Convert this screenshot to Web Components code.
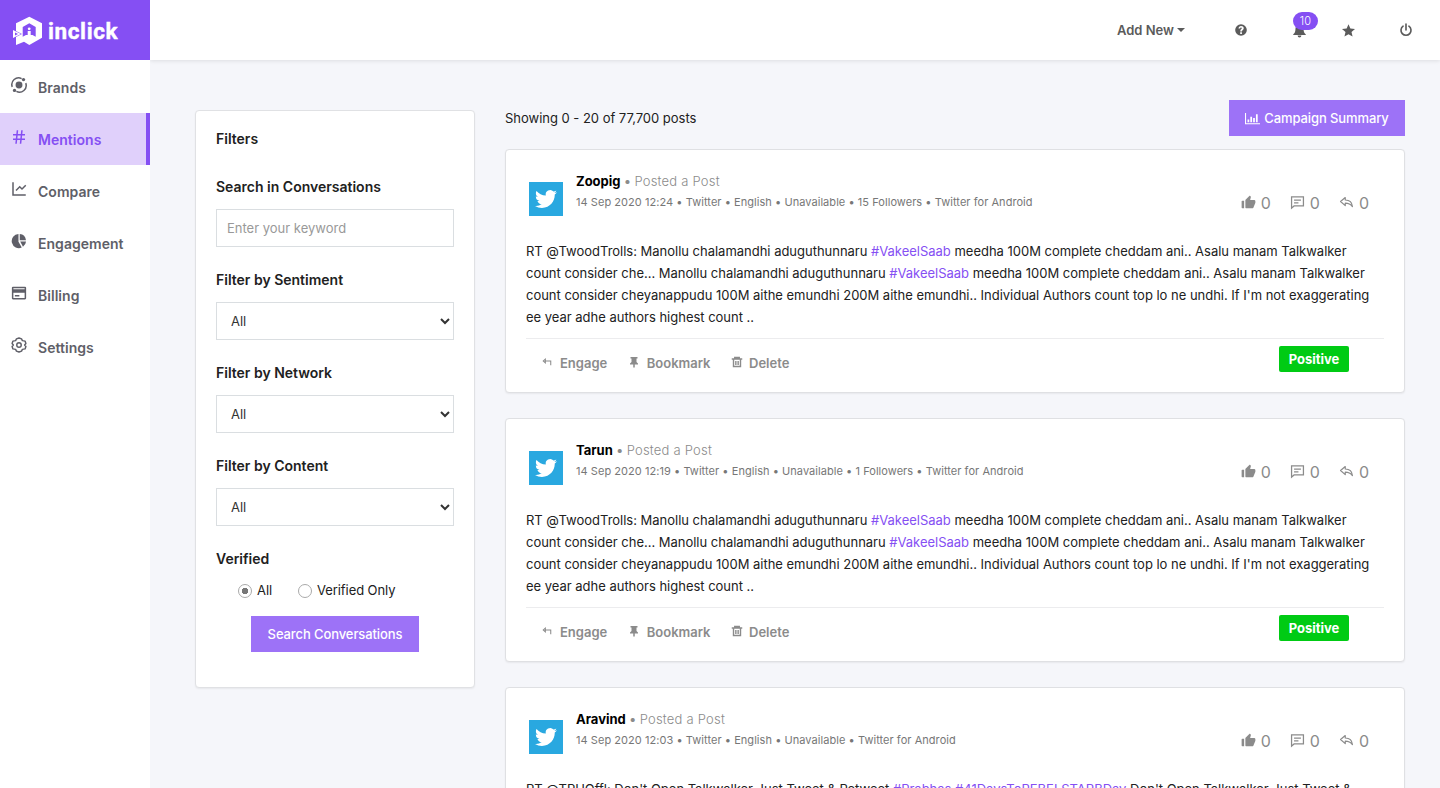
<!DOCTYPE html>
<html lang="en">
<head>
<meta charset="utf-8">
<title>inclick</title>
<style>
  html, body { height: 100%; }
  body {
    margin: 0;
    overflow: hidden;
    background: #f5f6fa;
    color: #212121;
    font-family: Inter, "Liberation Sans", sans-serif;
    font-size: 13px;
    --brand: #854ff3;
    --brand-soft: #9d72f7;
    --line: #dee2e6;
    --muted: #8b8b8b;
  }
</style>
</head>
<body>
<app-shell></app-shell>

<script>
(() => {
  'use strict';

  // ---------- Icons ----------
  const ICONS = {
    brands: '<circle cx="12" cy="12" r="4.600"/><path d="M3 14.500A9 9 0 0 1 15.500 3.400M21 9.500A9 9 0 0 1 8.500 20.600" fill="none" stroke="currentColor" stroke-width="2"/><circle cx="18" cy="4.800" r="2.200"/><circle cx="6" cy="19.200" r="2.200"/>',
    hash: '<path d="M7.784 14l.42-4H4V8h4.415l.525-5h2.011l-.525 5h3.989l.525-5h2.011l-.525 5H20v2h-3.784l-.42 4H20v2h-4.415l-.525 5h-2.011l.525-5H9.585l-.525 5H7.049l.525-5H4v-2h3.784zm2.011 0h3.990l.42-4h-3.990l-.42 4z"/>',
    line: '<path d="M5 3v16h16v2H3V3h2zm15.293 3.293l1.414 1.414L16 13.414l-3-2.999-4.293 4.292-1.414-1.414L13 7.586l3 2.999 4.293-4.292z"/>',
    pie: '<path d="M11.300 2.700V13l4.400 7.600A9.400 9.400 0 1 1 11.300 2.700zM13 2.700A9.400 9.400 0 0 1 21.300 11H13zM13.600 12.700h7.800a9.400 9.400 0 0 1-4.100 7z"/>',
    card: '<path d="M4 3.500h16a1.500 1.500 0 0 1 1.500 1.500v14a1.500 1.500 0 0 1-1.500 1.500H4A1.500 1.500 0 0 1 2.500 19V5A1.500 1.500 0 0 1 4 3.500zm15.500 8h-15v7h15v-7zm0-4.500V5.500h-15V7h15zM6.500 14.500h6v2h-6z"/>',
    gear: '<path d="M12 2.700l3.400 1.200 1.100 2.300 3.600.6 1.100 3.200L19.500 12l1.700 2-1.100 3.200-3.600.6-1.100 2.300L12 21.300l-3.400-1.200-1.100-2.300-3.600-.6L2.800 14l1.700-2-1.700-2 1.100-3.200 3.600-.6 1.100-2.300z" fill="none" stroke="currentColor" stroke-width="1.900" stroke-linejoin="round"/><circle cx="12" cy="12" r="3" fill="none" stroke="currentColor" stroke-width="1.900"/>',
    help: '<path fill-rule="evenodd" d="M12 2a10 10 0 1 0 0 20 10 10 0 0 0 0-20zM10.600 16h3v3h-3zM7.700 9.500C7.900 6.600 9.600 5 12.100 5c2.600 0 4.600 1.500 4.600 3.900 0 2.900-3 3.200-3 5.100v.6h-3V14c0-3.100 2.700-3.300 2.700-4.900 0-.8-.6-1.300-1.400-1.300-.9 0-1.400.6-1.500 1.700z"/>',
    bell: '<path d="M12 2a1.500 1.500 0 0 1 1.500 1.700C17 4.400 18.500 7 18.500 10c0 4.500 1.500 6.500 3.500 8v1H2v-1c2-1.500 3.500-3.500 3.500-8 0-3 1.500-5.600 5-6.300A1.500 1.500 0 0 1 12 2zM9 20h6a3 3 0 0 1-6 0z"/>',
    star: '<path d="M12 2l3 6.800 7.400.7-5.600 4.900 1.700 7.200L12 17.800l-6.500 3.800 1.700-7.200-5.600-4.900L9 8.800z"/>',
    power: '<path d="M7 5.500a8.600 8.600 0 1 0 10 0M12 2v10" fill="none" stroke="currentColor" stroke-width="2.800" stroke-linecap="round"/>',
    bars: '<path d="M0 3h1.700v16.500H24V21H0zM4 13.500h2.800V18H4zM8.500 9h2.800v9H8.500zM13 11h2.800v7H13zM17.500 5h2.800v13h-2.800z"/>',
    like: '<path d="M2 9h3v12H2a1 1 0 0 1-1-1V10a1 1 0 0 1 1-1zm5.293-1.293l6.400-6.400a.5.5 0 0 1 .654-.047l.853.640a1.500 1.500 0 0 1 .553 1.570L14.600 8H21a2 2 0 0 1 2 2v2.104a2 2 0 0 1-.150.762l-3.095 7.515a1 1 0 0 1-.925.619H8a1 1 0 0 1-1-1V8.414a1 1 0 0 1 .293-.707z"/>',
    chat: '<path d="M2.500 3h19v14.500H6.500L2.500 21zM6.500 8h11M6.500 12.500h7" fill="none" stroke="currentColor" stroke-width="2"/>',
    reply: '<path d="M10 4L2.500 10.500 10 17v-4c5 0 8.500 1.500 11.500 5.500C21 12 17 8 10 8z" fill="none" stroke="currentColor" stroke-width="1.900" stroke-linejoin="round"/>',
    engage: '<path d="M8 5L3 9.500 8 14zM7 9.500h14V20" fill="none" stroke="currentColor" stroke-width="2.500"/>',
    pin: '<path d="M5 2h14v3h-2v7l3 3v2h-6.500v5l-1.500 2-1.500-2v-5H4v-2l3-3V5H5z"/>',
    trash: '<path d="M7.500 6V3h9v3M1.500 6h21M5 6v15h14V6M9.700 10v8M14.300 10v8" fill="none" stroke="currentColor" stroke-width="2.800"/>',
    bird: '<path d="M23.953 4.570a10 10 0 0 1-2.825.775 4.958 4.958 0 0 0 2.163-2.723c-.951.555-2.005.959-3.127 1.184a4.920 4.920 0 0 0-8.384 4.482C7.690 8.095 4.067 6.130 1.640 3.162a4.822 4.822 0 0 0-.666 2.475c0 1.710.870 3.213 2.188 4.096a4.904 4.904 0 0 1-2.228-.616v.060a4.923 4.923 0 0 0 3.946 4.827 4.996 4.996 0 0 1-2.212.085 4.936 4.936 0 0 0 4.604 3.417 9.867 9.867 0 0 1-6.102 2.105c-.390 0-.779-.023-1.170-.067a13.995 13.995 0 0 0 7.557 2.209c9.053 0 13.998-7.496 13.998-13.985 0-.210 0-.420-.015-.630A9.935 9.935 0 0 0 24 4.590z"/>'
  };

  class UiIcon extends HTMLElement {
    constructor() {
      super();
      this.attachShadow({ mode: 'open' });
    }
    connectedCallback() {
      const size = this.getAttribute('size') || 16;
      this.shadowRoot.innerHTML = `
        <style>
          :host{ display:inline-block; flex:none; width:${size}px; height:${size}px }
          svg{ display:block; width:100%; height:100%; fill:currentColor }
        </style>
        <svg viewBox="0 0 24 24" aria-hidden="true">${ICONS[this.getAttribute('name')] || ''}</svg>
      `;
    }
  }

  // Small helper: element with a fixed shadow template
  const define = (tag, render) => customElements.define(tag, class extends HTMLElement {
    constructor() {
      super();
      this.attachShadow({ mode: 'open' });
    }
    connectedCallback() { this.shadowRoot.innerHTML = render(this); }
  });

  customElements.define('ui-icon', UiIcon);

  // ---------- Sidebar ----------
  define('brand-logo', () => `
    <style>
      :host{
        display:flex; align-items:center; gap:5px; height:60px;
        padding:2px 0 0 12px; box-sizing:border-box;
        background:var(--brand); color:#fff;
      }
      svg{ width:31px; height:30px; flex:none }
      span{ font:700 22.500px/28px Roboto, sans-serif; letter-spacing:.6px; -webkit-text-stroke:.4px #fff }
    </style>
    <svg viewBox="0 0 31 30">
      <path fill="#fff" fill-rule="evenodd" d="M17.300.7L30 7.300v14.400L17.300 29 12 25.700 4 29V7.300zM17.300 7.300L10.700 11v9.700l3.300-1.700h6.500l3.200 1.700V11z"/>
      <path d="M-1 12.500L10 18-1 23.500z" fill="#854ff3"/>
      <path fill="#fff" fill-rule="evenodd" d="M1 14l8 4-8 4zM3 16.500v3l3-1.500z"/>
      <circle cx="17.200" cy="12.800" r="1.400" fill="#fff"/>
      <path d="M15.700 15h3v6h-3z" fill="#fff"/>
    </svg>
    <span>inclick</span>
  `);

  define('nav-item', el => `
    <style>
      :host{
        display:flex; align-items:center; height:52px; padding-left:10px;
        box-sizing:border-box; color:#5f5f68;
        font-size:14px; font-weight:600; letter-spacing:.03px;
        border-right:4px solid transparent;
      }
      :host([active]){ color:var(--brand); background:#e0d0fb; border-color:var(--brand) }
      ui-icon{ margin:-4px 10px 0 0 }
    </style>
    <ui-icon name="${el.getAttribute('icon')}" size="18"></ui-icon><slot></slot>
  `);

  define('side-bar', () => `
    <style>
      :host{ display:block; width:150px; background:#fff }
      nav{ padding-top:1px }
    </style>
    <brand-logo></brand-logo>
    <nav>
      <nav-item icon="brands">Brands</nav-item>
      <nav-item icon="hash" active>Mentions</nav-item>
      <nav-item icon="line">Compare</nav-item>
      <nav-item icon="pie">Engagement</nav-item>
      <nav-item icon="card">Billing</nav-item>
      <nav-item icon="gear">Settings</nav-item>
    </nav>
  `);

  // ---------- Top bar ----------
  define('top-bar', () => `
    <style>
      :host{
        display:flex; align-items:center; justify-content:flex-end;
        height:60px; padding-right:27px; box-sizing:border-box;
        background:#fff; color:#5b5b5b; box-shadow:0 1px 4px rgba(0,0,0,.1);
      }
      .add{ display:flex; align-items:center; gap:3px; font-weight:600; margin-right:49px }
      .add i{ border:4px solid transparent; border-top-color:currentColor; border-bottom:0 }
      .bell{ position:relative; display:flex; margin:0 34px 0 44px }
      .badge{
        position:absolute; left:1px; top:-11px; width:25px; height:18px; border-radius:9px;
        background:var(--brand); color:#fff; font-size:11px; font-weight:300;
        line-height:18px; text-align:center; letter-spacing:.3px;
      }
      .power{ margin-left:43px }
    </style>
    <div class="add">Add New<i></i></div>
    <ui-icon name="help" size="14"></ui-icon>
    <div class="bell"><ui-icon name="bell" size="15"></ui-icon><span class="badge">10</span></div>
    <ui-icon name="star" size="15"></ui-icon>
    <ui-icon class="power" name="power" size="14"></ui-icon>
  `);

  // ---------- Filters ----------
  define('filter-field', el => `
    <style>
      :host{ display:block; height:93px }
      label{ display:block; font-size:14px; font-weight:600; line-height:20px; margin-bottom:12px }
    </style>
    <label>${el.getAttribute('label')}</label><slot></slot>
  `);

  define('filter-panel', () => `
    <style>
      :host{
        display:block; width:280px; height:578px; box-sizing:border-box;
        padding:18px 20px; background:#fff; border:1px solid #e0e1e4; border-radius:4px;
        box-shadow:0 1px 2px rgba(0,0,0,.06);
      }
      h2{ margin:0 0 28px; font-size:14px; font-weight:600; line-height:20px }
      input[type=text], select{
        display:block; width:100%; height:38px; box-sizing:border-box;
        border:1px solid #dadee1; border-radius:0; background:#fff; outline:0;
        font:13px Inter, sans-serif; color:#333; padding:0 10px;
      }
      input::placeholder{ color:#999 }
      select{ padding:0 0 0 10px }
      .verified{ height:67px }
      .radios{ display:flex; gap:26px; padding-left:22px; margin-top:-1px }
      .radios label{ display:flex; align-items:center; gap:5px; line-height:20px; font-size:13px; letter-spacing:-.08px }
      input[type=radio]{
        appearance:none; width:14px; height:14px; margin:1px 0 0; border:1px solid #aaa; border-radius:50%;
      }
      input[type=radio]:checked{ background:radial-gradient(circle, #777 0 3px, #fff 3.500px) }
      button{
        display:block; width:168px; height:36px; margin:0 auto; padding:0; border:0;
        background:var(--brand-soft); color:#fff; font:500 13px Inter, sans-serif; letter-spacing:-.1px;
      }
    </style>
    <h2>Filters</h2>
    <filter-field label="Search in Conversations"><input type="text" placeholder="Enter your keyword"></filter-field>
    <filter-field label="Filter by Sentiment"><select><option>All</option></select></filter-field>
    <filter-field label="Filter by Network"><select><option>All</option></select></filter-field>
    <filter-field label="Filter by Content"><select><option>All</option></select></filter-field>
    <filter-field class="verified" label="Verified">
      <div class="radios">
        <label><input type="radio" name="verified" checked>All</label>
        <label><input type="radio" name="verified">Verified Only</label>
      </div>
    </filter-field>
    <button>Search Conversations</button>
  `);

  // ---------- Posts ----------
  define('post-stat', el => `
    <style>
      :host{ display:flex; align-items:center; gap:5px; font-size:16px; line-height:20px; color:var(--muted) }
      ui-icon{ margin-top:-2px }
    </style>
    <ui-icon name="${el.getAttribute('icon')}" size="15"></ui-icon><slot></slot>
  `);

  define('post-action', el => `
    <style>
      :host{ display:flex; align-items:center; font-weight:600; line-height:20px; color:var(--muted) }
      ui-icon{ margin:-2px var(--icon-gap, 6px) 0 0 }
    </style>
    <ui-icon name="${el.getAttribute('icon')}" size="${el.getAttribute('size') || 12}"></ui-icon><slot></slot>
  `);

  define('post-card', el => `
    <style>
      :host{
        display:block; height:244px; box-sizing:border-box; padding:20px;
        background:#fff; border:1px solid #dfe0e3; border-radius:4px;
        box-shadow:0 1px 2px rgba(0,0,0,.06);
      }
      header{ display:flex; height:70px }
      .avatar{
        display:grid; place-items:center; width:34px; height:34px; margin:12px 13px 0 3px;
        background:#29a8e0; color:#fff;
      }
      .who{ flex:1; line-height:20px; padding-top:1px }
      .name{ color:var(--muted); font-weight:300; letter-spacing:.22px }
      .name b{ color:#000; font-weight:700; letter-spacing:0 }
      .name span{ font-weight:500; margin:0 -.5px }
      .meta{ color:#777; font-size:11px; line-height:23px; letter-spacing:.05px }
      .stats{ display:flex; gap:19px; padding:23px 15px 0 0; height:20px }
      .text{ height:98px; line-height:22px; letter-spacing:-.014px; white-space:nowrap; border-bottom:1px solid #ececee }
      footer{ display:flex; align-items:flex-start; padding-top:14px }
      .engage{ margin-left:16px; --icon-gap:8px }
      .bookmark{ margin-left:21px; --icon-gap:6.500px }
      .delete{ margin-left:20.500px }
      .badge{
        margin:-7px 35px 0 auto; width:70px; height:26px; border-radius:2px;
        background:#00cb14; color:#fff; font-weight:700; line-height:26px; text-align:center;
      }
    </style>
    <header>
      <div class="avatar"><ui-icon name="bird" size="22"></ui-icon></div>
      <div class="who">
        <div class="name"><b>${el.getAttribute('author')}</b> <span>•</span> Posted a Post</div>
        <div class="meta">${el.getAttribute('meta')}</div>
      </div>
      <div class="stats">
        <post-stat icon="like">0</post-stat>
        <post-stat icon="chat">0</post-stat>
        <post-stat icon="reply">0</post-stat>
      </div>
    </header>
    <div class="text"><slot></slot></div>
    <footer>
      <post-action class="engage" icon="engage" size="10">Engage</post-action>
      <post-action class="bookmark" icon="pin">Bookmark</post-action>
      <post-action class="delete" icon="trash">Delete</post-action>
      <span class="badge">Positive</span>
    </footer>
  `);

  define('hash-tag', () => `
    <style>:host{ color:var(--brand) }</style><slot></slot>
  `);

  const vakeel = `RT @TwoodTrolls: Manollu chalamandhi aduguthunnaru <hash-tag>#VakeelSaab</hash-tag> meedha 100M complete cheddam ani.. Asalu manam Talkwalker<br>
    count consider che... Manollu chalamandhi aduguthunnaru <hash-tag>#VakeelSaab</hash-tag> meedha 100M complete cheddam ani.. Asalu manam Talkwalker<br>
    count consider cheyanappudu 100M aithe emundhi 200M aithe emundhi.. Individual Authors count top lo ne undhi. If I'm not exaggerating<br>
    ee year adhe authors highest count ..`;

  const POSTS = [
    {
      author: 'Zoopig',
      meta: '14 Sep 2020 12:24 • Twitter • English • Unavailable • 15 Followers • Twitter for Android',
      text: vakeel
    },
    {
      author: 'Tarun',
      meta: '14 Sep 2020 12:19 • Twitter • English • Unavailable • 1 Followers • Twitter for Android',
      text: vakeel
    },
    {
      author: 'Aravind',
      meta: '14 Sep 2020 12:03 • Twitter • English • Unavailable • Twitter for Android',
      text: `RT @TPHOffl: Don't Open Talkwalker Just Tweet &amp; Retweet <hash-tag>#Prabhas</hash-tag> <hash-tag>#41DaysToREBELSTARBDay</hash-tag> Don't Open Talkwalker Just Tweet &amp;`
    }
  ];

  define('post-feed', () => `
    <style>
      :host{ display:block; width:900px }
      .bar{ display:flex; justify-content:space-between; height:49px }
      .count{ line-height:20px; padding-top:8px; letter-spacing:-.02px }
      button{
        display:flex; align-items:center; justify-content:center; gap:4px;
        width:176px; height:36px; padding:0; border:0;
        background:var(--brand-soft); color:#fff; font:500 13px Inter, sans-serif; letter-spacing:-.1px;
      }
      .list{ display:grid; gap:25px }
    </style>
    <div class="bar">
      <span class="count">Showing 0 - 20 of 77,700 posts</span>
      <button><ui-icon name="bars" size="15"></ui-icon>Campaign Summary</button>
    </div>
    <div class="list">
      ${POSTS.map(p => `<post-card author="${p.author}" meta="${p.meta}">${p.text}</post-card>`).join('')}
    </div>
  `);

  // ---------- Shell ----------
  define('app-shell', () => `
    <style>
      :host{ display:grid; grid-template-columns:150px 1fr; height:100vh; overflow:hidden }
      .main{ min-width:0; overflow:hidden }
      .content{ display:flex; gap:30px; padding:40px 35px 0 45px }
      filter-panel{ margin-top:10px; flex:none }
    </style>
    <side-bar></side-bar>
    <div class="main">
      <top-bar></top-bar>
      <div class="content">
        <filter-panel></filter-panel>
        <post-feed></post-feed>
      </div>
    </div>
  `);
})();
</script>
</body>
</html>
